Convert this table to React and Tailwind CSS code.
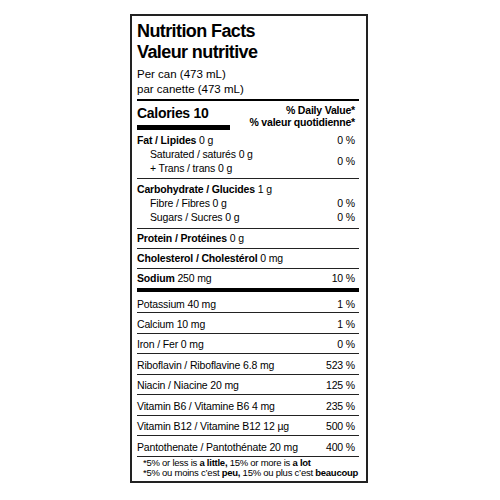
const vitamins = [
  ["Potassium 40 mg", "1 %"],
  ["Calcium 10 mg", "1 %"],
  ["Iron / Fer 0 mg", "0 %"],
  ["Riboflavin / Riboflavine 6.8 mg", "523 %"],
  ["Niacin / Niacine 20 mg", "125 %"],
  ["Vitamin B6 / Vitamine B6 4 mg", "235 %"],
  ["Vitamin B12 / Vitamine B12 12 µg", "500 %"],
  ["Pantothenate / Pantothénate 20 mg", "400 %"],
];

export default function App() {
  return (
    <div className="min-h-screen bg-white pt-[14px] font-['Liberation_Sans',Arial,sans-serif] text-black">
      <div className="ml-[130px] w-[238px] border-2 border-[#222] pl-[5px] pr-[7px] pt-[5px] pb-[3.5px]">
        {/* Title */}
        <div className="text-[18px] leading-[21px] font-bold tracking-[-0.6px]">
          <div>Nutrition Facts</div>
          <div>Valeur nutritive</div>
        </div>
        <div className="mt-[3.5px] text-[11.5px] leading-[15px]">
          <div>Per can (473 mL)</div>
          <div>par canette (473 mL)</div>
        </div>
        <div className="mt-[2.5px] h-[2px] bg-black" />

        {/* Calories / % DV header */}
        <div className="flex justify-between">
          <div className="pt-[4px]">
            <div className="text-[14px] leading-[16px] font-bold tracking-[-0.3px]">Calories 10</div>
            <div className="mt-[4px] h-[5px] w-[93px] bg-black" />
          </div>
          <div className="pt-[3.4px] pr-[4px] text-right text-[10.5px] leading-[12px] font-bold tracking-[-0.2px]">
            <div>% Daily Value*</div>
            <div>% valeur quotidienne*</div>
          </div>
        </div>

        <div className="text-[10.5px] leading-[14px] tracking-[-0.15px]">
          {/* Fat */}
          <div className="border-b border-[#222] pt-[3.4px] pb-[2.6px] pr-[4px]">
            <div className="flex justify-between">
              <span><b>Fat / Lipides</b> 0 g</span>
              <span>0 %</span>
            </div>
            <div className="flex items-center justify-between">
              <div className="pl-[13px]">
                <div>Saturated / saturés 0 g</div>
                <div>+ Trans / trans 0 g</div>
              </div>
              <span>0 %</span>
            </div>
          </div>

          {/* Carbohydrate */}
          <div className="border-b border-[#222] pt-[3.4px] pb-[3.6px] pr-[4px]">
            <div><b>Carbohydrate / Glucides</b> 1 g</div>
            <div className="flex justify-between pl-[13px]">
              <span>Fibre / Fibres 0 g</span>
              <span>0 %</span>
            </div>
            <div className="flex justify-between pl-[13px]">
              <span>Sugars / Sucres 0 g</span>
              <span>0 %</span>
            </div>
          </div>

          <div className="h-[20px] border-b border-[#222] pt-[2px]">
            <b>Protein / Protéines</b> 0 g
          </div>
          <div className="h-[20px] border-b border-[#222] pt-[2px]">
            <b>Cholesterol / Cholestérol</b> 0 mg
          </div>
          <div className="flex h-[19px] justify-between pt-[2px] pr-[4px]">
            <span><b>Sodium</b> 250 mg</span>
            <span>10 %</span>
          </div>
          <div className="h-[4px] bg-black" />

          {vitamins.map(([name, dv], i) => (
            <div
              key={name}
              className={
                i === 0
                  ? "flex h-[21.5px] justify-between border-b border-[#222] pt-[5px] pr-[4px]"
                  : "flex h-[20.5px] justify-between border-b border-[#222] pt-[3.5px] pr-[4px]"
              }
            >
              <span>{name}</span>
              <span>{dv}</span>
            </div>
          ))}
        </div>

        {/* Footnote */}
        <div className="pt-[1.5px] pl-[6px] text-[9.5px] leading-[9.5px] tracking-[-0.25px]">
          <div>*5% or less is <b>a little,</b> 15% or more is <b>a lot</b></div>
          <div>*5% ou moins c’est <b>peu,</b> 15% ou plus c’est <b>beaucoup</b></div>
        </div>
      </div>
    </div>
  );
}
